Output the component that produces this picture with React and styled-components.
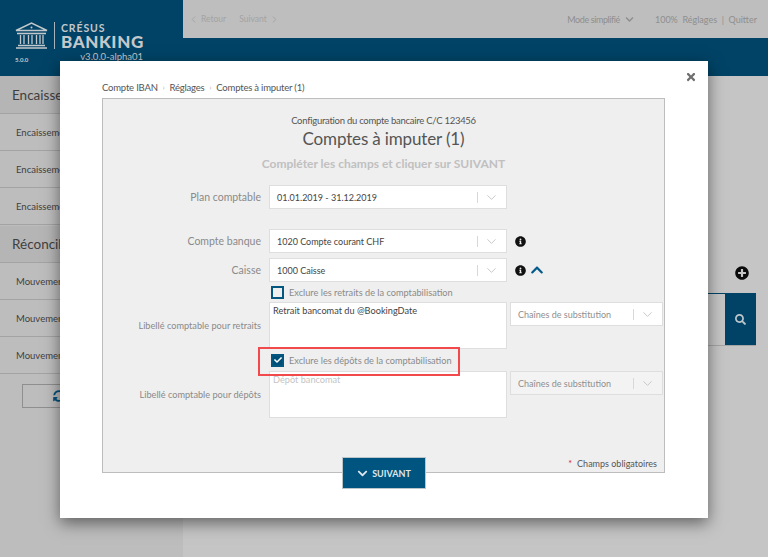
import React from 'react'
import styled, { createGlobalStyle } from 'styled-components'
import { FaInfoCircle, FaChevronUp, FaChevronDown, FaPlusCircle, FaSearch, FaTimes, FaCheck, FaSyncAlt } from 'react-icons/fa'
import { ChevronLeft, ChevronRight, ChevronDown } from 'lucide-react'

const GlobalStyle = createGlobalStyle`
    html, body {
        margin: 0;
        padding: 0;
        height: 100%;
        overflow: hidden;
        font-family: Lato, "Open Sans", sans-serif;
    }
    * { box-sizing: border-box; }
`

const Page = styled.div`
    position: relative;
    display: grid;
    grid-template-columns: 183px 1fr;
    width: 768px;
    height: 557px;
    overflow: hidden;
    background: #c5c5c5;
`

const Sidebar = styled.aside`
    display: flex;
    flex-direction: column;
    background: #bdbdbd;
`

const Brand = styled.div`
    height: 76px;
    padding: 22px 0 0 15px;
    background: #004366;
    color: #c4c8cb;
    display: grid;
    grid-template-columns: 33px 1fr;
    grid-template-rows: 27px auto;
    align-content: start;
    column-gap: 6px;
`

const BrandName = styled.div`
    border-left: 1px solid #a8b4bc;
    padding-left: 6px;
    height: 27px;
    font-weight: 700;
    display: flex;
    flex-direction: column;
`

const BrandTop = styled.span`
    font-size: 10.5px;
    line-height: 11px;
    letter-spacing: 0.9px;
    margin-top: 1px;
`

const BrandMain = styled.span`
    font-size: 17px;
    font-weight: 900;
    line-height: 16px;
    letter-spacing: 0.6px;
`

const BrandVersions = styled.div`
    grid-column: 1 / 3;
    display: flex;
    align-items: flex-end;
    justify-content: space-between;
    width: 128px;
    margin-top: 2px;
`

const SmallVersion = styled.span`
    font-size: 6px;
    font-weight: 700;
`

const LongVersion = styled.span`
    font-size: 9.5px;
    line-height: 12px;
`

const SectionTitle = styled.div`
    height: ${p => p.$h || 38}px;
    margin-top: ${p => p.$mt || 0}px;
    padding-left: 12px;
    display: flex;
    align-items: center;
    font-size: 13.5px;
    color: #3f3f3f;
    background: #b5b5b5;
    border-bottom: 1px solid #a3a3a3;
`

const SideItem = styled.div`
    height: 37px;
    padding-left: 16px;
    display: flex;
    align-items: center;
    font-size: 9.5px;
    color: #404040;
    border-bottom: 1px solid #a3a3a3;
`

const SideButton = styled.div`
    margin: 10px 0 0 22px;
    width: 130px;
    height: 24px;
    padding-left: 30px;
    border: 1px solid #8f8f8f;
    display: flex;
    align-items: center;
    color: #03527e;
    font-size: 12px;
`

const Main = styled.main`
    display: flex;
    flex-direction: column;
`

const TopBar = styled.header`
    height: 38px;
    padding: 0 11px 0 5px;
    background: #bebebe;
    display: flex;
    align-items: center;
    font-size: 8.5px;
    color: #a3a3a3;
`

const NavLink = styled.span`
    display: flex;
    align-items: center;
    gap: 2px;
    margin-right: 13px;
`

const TopRight = styled.div`
    margin-left: auto;
    display: flex;
    align-items: center;
    color: #8e8e8e;
    font-size: 9px;
`

const ModeLabel = styled.span`
    display: flex;
    align-items: center;
    gap: 5px;
    font-size: 9px;
    letter-spacing: -0.4px;
    margin-right: 21px;
`

const BlueBar = styled.div`
    height: 38px;
    background: #004366;
`

const Content = styled.div`
    flex: 1;
    padding: 190px 12px 0 0;
    display: flex;
    flex-direction: column;
    align-items: flex-end;
`

const PlusIcon = styled(FaPlusCircle)`
    width: 14px;
    height: 14px;
    color: #0a0a0a;
    margin-right: 7px;
`

const SearchBox = styled.div`
    margin-top: 13px;
    width: 200px;
    height: 53px;
    display: flex;
    justify-content: flex-end;
    border-top: 1px solid #004366;
    border-bottom: 1px solid #a5a5a5;
`

const SearchButton = styled.div`
    width: 31px;
    background: #004366;
    color: #bcc6cc;
    display: flex;
    align-items: center;
    justify-content: center;
    font-size: 11px;
`

const Overlay = styled.div`
    position: absolute;
    inset: 0;
    padding: 61px 60px 39px;
`

const Modal = styled.div`
    position: relative;
    height: 457px;
    background: #fff;
    box-shadow: 0 5px 15px rgba(0, 0, 0, 0.5);
    padding: 17px 42px 0;
`

const CloseIcon = styled(FaTimes)`
    position: absolute;
    top: 10px;
    right: 11px;
    width: 12px;
    height: 12px;
    color: #6f6f6f;
`

const Breadcrumb = styled.nav`
    height: 20px;
    padding-bottom: 2px;
    display: flex;
    align-items: center;
    gap: 5px;
    font-size: 9.5px;
    letter-spacing: -0.2px;
    color: #555;
`

const Sep = styled.span`
    font-size: 7px;
    color: #aaa;
`

const Panel = styled.section`
    position: relative;
    width: 563px;
    height: 375px;
    background: #efefef;
    border: 1px solid #bdbdbd;
    padding-top: 15px;
`

const Subtitle = styled.div`
    text-align: center;
    font-size: 9.5px;
    letter-spacing: -0.27px;
    line-height: 13px;
    color: #555;
`

const Title = styled.h1`
    margin: 1px 0 0;
    text-align: center;
    font-size: 17px;
    letter-spacing: -0.15px;
    line-height: 22px;
    font-weight: 400;
    color: #555;
`

const Hint = styled.div`
    margin: 6px 0 13px;
    text-align: center;
    font-size: 12px;
    line-height: 16px;
    font-weight: 700;
    color: #c0c0c0;
`

const Row = styled.div`
    display: grid;
    grid-template-columns: 158px 238px auto;
    column-gap: 8px;
    align-items: ${p => p.$top ? 'start' : 'center'};
    margin-top: ${p => p.$mt || 0}px;
`

const Label = styled.label`
    text-align: right;
    font-size: ${p => p.$small ? 9.2 : 10.5}px;
    color: #8a8a8a;
    align-self: center;
`

const Select = styled.div`
    height: 24px;
    padding: 0 7px;
    background: ${p => p.$muted ? '#f3f3f3' : '#fff'};
    border: 1px solid #dedede;
    display: flex;
    align-items: center;
    font-size: 9px;
    color: ${p => p.$dim ? '#8f8f8f' : '#444'};
`

const SelectValue = styled.span`
    flex: 1;
`

const SelectDivider = styled.span`
    width: 1px;
    height: 11px;
    background: #d8d8d8;
    margin-right: 6px;
`

const Arrow = styled(ChevronDown)`
    width: 15px;
    height: 15px;
    color: #c4c4c4;
`

const InfoGroup = styled.div`
    display: flex;
    align-items: center;
    gap: 4px;
    color: #111;
    font-size: 11px;
`

const UpIcon = styled(FaChevronUp)`
    color: #045a8a;
    font-size: 14px;
`

const CheckRow = styled.div`
    display: flex;
    align-items: center;
    gap: 5px;
    height: ${p => p.$h}px;
    padding-left: 2px;
    font-size: 9.2px;
    color: #8a8a8a;
`

const Checkbox = styled.span`
    width: 13px;
    height: 13px;
    border: 2px solid #04587f;
    background: ${p => p.$checked ? '#004f78' : 'transparent'};
    color: #fff;
    display: flex;
    align-items: center;
    justify-content: center;
    font-size: 8px;
`

const TextBox = styled.div`
    height: 47px;
    padding: 1px 3px;
    background: #fff;
    border: 1px solid #dedede;
    font-size: 9.2px;
    line-height: 13px;
    color: ${p => p.$placeholder ? '#c4c4c4' : '#444'};
`

const Highlight = styled.div`
    position: absolute;
    left: 155px;
    top: 248px;
    width: 202px;
    height: 29px;
    border: 2px solid #f2494c;
`

const Required = styled.div`
    position: absolute;
    right: 7px;
    bottom: 3px;
    font-size: 9px;
    color: #555;
`

const Star = styled.span`
    color: #d8232a;
    margin-right: 5px;
`

const NextButton = styled.button`
    position: absolute;
    left: 239px;
    bottom: -17px;
    width: 84px;
    height: 32px;
    border: 1px solid #b9c4cb;
    background: #005580;
    color: #dfe7ec;
    font-family: inherit;
    font-size: 9px;
    font-weight: 700;
    display: flex;
    align-items: center;
    justify-content: center;
    gap: 4px;
`

const ShiftWrap = styled.div`
    width: 153px;
    margin-left: -5px;
`

function SelectBox({ value, muted, dim }) {
    return (
        <Select $muted={muted} $dim={dim}>
            <SelectValue>{value}</SelectValue>
            <SelectDivider />
            <Arrow strokeWidth={1.5} />
        </Select>
    )
}

function SubstitutionSelect({ muted }) {
    return (
        <ShiftWrap>
            <SelectBox value="Chaînes de substitution" muted={muted} dim />
        </ShiftWrap>
    )
}

function BankLogo() {
    return (
        <svg width="33" height="27" viewBox="0 0 33 27" fill="none" stroke="#c4c8cb">
            <path d="M1 8.5 16.5 1 32 8.5Z" strokeWidth="1.4" />
            <circle cx="16.5" cy="5.5" r="1" fill="#c4c8cb" stroke="none" />
            <path d="M2 11.5h29" strokeWidth="1.6" />
            <path d="M5.5 13v9M9 13v9M13.5 13v9M17 13v9M21.5 13v9M25 13v9M28 13v9" strokeWidth="1.3" />
            <path d="M3 23.5h27M1 26h31" strokeWidth="1.6" />
        </svg>
    )
}

export default function App() {
    return (
        <>
            <GlobalStyle />
            <Page>
                <Sidebar>
                    <Brand>
                        <BankLogo />
                        <BrandName>
                            <BrandTop>CRÉSUS</BrandTop>
                            <BrandMain>BANKING</BrandMain>
                        </BrandName>
                        <BrandVersions>
                            <SmallVersion>5.0.0</SmallVersion>
                            <LongVersion>v3.0.0-alpha01</LongVersion>
                        </BrandVersions>
                    </Brand>
                    <SectionTitle>Encaissements</SectionTitle>
                    <SideItem>Encaissements</SideItem>
                    <SideItem>Encaissements</SideItem>
                    <SideItem>Encaissements</SideItem>
                    <SectionTitle $mt={1} $h={37}>Réconciliation</SectionTitle>
                    <SideItem>Mouvements</SideItem>
                    <SideItem>Mouvements</SideItem>
                    <SideItem>Mouvements</SideItem>
                    <SideButton><FaSyncAlt /></SideButton>
                </Sidebar>
                <Main>
                    <TopBar>
                        <NavLink><ChevronLeft size={11} />Retour</NavLink>
                        <NavLink>Suivant<ChevronRight size={11} /></NavLink>
                        <TopRight>
                            <ModeLabel>Mode simplifié<FaChevronDown size={9} /></ModeLabel>
                            100%&nbsp; Réglages&nbsp; |&nbsp; Quitter
                        </TopRight>
                    </TopBar>
                    <BlueBar />
                    <Content>
                        <PlusIcon />
                        <SearchBox>
                            <SearchButton><FaSearch /></SearchButton>
                        </SearchBox>
                    </Content>
                </Main>
                <Overlay>
                    <Modal>
                        <CloseIcon />
                        <Breadcrumb>
                            Compte IBAN <Sep>›</Sep> Réglages <Sep>›</Sep> Comptes à imputer (1)
                        </Breadcrumb>
                        <Panel>
                            <Subtitle>Configuration du compte bancaire C/C 123456</Subtitle>
                            <Title>Comptes à imputer (1)</Title>
                            <Hint>Compléter les champs et cliquer sur SUIVANT</Hint>
                            <Row>
                                <Label>Plan comptable</Label>
                                <SelectBox value="01.01.2019 - 31.12.2019" />
                            </Row>
                            <Row $mt={20}>
                                <Label>Compte banque</Label>
                                <SelectBox value="1020 Compte courant CHF" />
                                <InfoGroup><FaInfoCircle /></InfoGroup>
                            </Row>
                            <Row $mt={5}>
                                <Label>Caisse</Label>
                                <SelectBox value="1000 Caisse" />
                                <InfoGroup><FaInfoCircle /><UpIcon /></InfoGroup>
                            </Row>
                            <Row>
                                <span />
                                <CheckRow $h={20}>
                                    <Checkbox />
                                    Exclure les retraits de la comptabilisation
                                </CheckRow>
                            </Row>
                            <Row $top>
                                <Label $small>Libellé comptable pour retraits</Label>
                                <TextBox>Retrait bancomat du @BookingDate</TextBox>
                                <SubstitutionSelect />
                            </Row>
                            <Row>
                                <span />
                                <CheckRow $h={22}>
                                    <Checkbox $checked><FaCheck /></Checkbox>
                                    Exclure les dépôts de la comptabilisation
                                </CheckRow>
                            </Row>
                            <Row $top>
                                <Label $small>Libellé comptable pour dépôts</Label>
                                <TextBox $placeholder>Dépôt bancomat</TextBox>
                                <SubstitutionSelect muted />
                            </Row>
                            <Highlight />
                            <Required><Star>*</Star>Champs obligatoires</Required>
                            <NextButton><FaChevronDown size={11} /> SUIVANT</NextButton>
                        </Panel>
                    </Modal>
                </Overlay>
            </Page>
        </>
    )
}
